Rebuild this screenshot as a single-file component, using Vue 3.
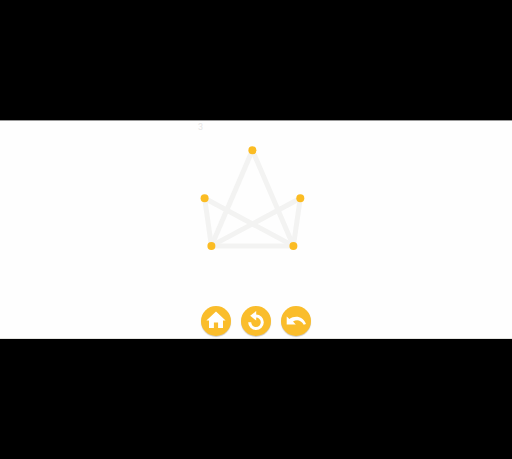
<template>
  <div class="screen">
    <main class="game">
      <div class="board">
        <span class="level">{{ level }}</span>
        <svg class="puzzle" viewBox="0 0 116 120" role="img" aria-label="Puzzle">
          <line
            v-for="edge in edges"
            :key="edge.join('-')"
            class="edge"
            :x1="points[edge[0]].x"
            :y1="points[edge[0]].y"
            :x2="points[edge[1]].x"
            :y2="points[edge[1]].y"
          />
          <circle
            v-for="(point, index) in points"
            :key="index"
            class="dot"
            :class="{ active: index === current }"
            :cx="point.x"
            :cy="point.y"
            r="4"
            @click="selectPoint(index)"
          />
        </svg>
      </div>

      <nav class="controls">
        <button type="button" aria-label="Home" @click="reset">
          <svg viewBox="0 0 30 30">
            <path d="M15 5.6 L24.6 14.4 H22 V22 H17.1 V16.4 H12.9 V22 H8 V14.4 H5.4 Z" />
          </svg>
        </button>
        <button type="button" aria-label="Restart" @click="reset">
          <svg viewBox="0 0 30 30">
            <path class="stroke" d="M15 10 A6.3 6.3 0 1 1 8.7 16.3" />
            <path d="M9.2 9.8 L15.2 5 V14.6 Z" />
          </svg>
        </button>
        <button type="button" aria-label="Undo" @click="undo">
          <svg viewBox="0 0 30 30">
            <path d="M5.7 10.5 L8.4 13.1 C13.8 9.2 22 10 25 18 L22.7 18.8 C20.3 14.3 15.9 13.1 12 15.6 L14.8 18.5 H5.7 Z" />
          </svg>
        </button>
      </nav>
    </main>
  </div>
</template>

<script setup>
import { ref } from 'vue';

const level = ref(3);

const points = [
  { x: 54.4, y: 18.3 },
  { x: 6.6, y: 66.2 },
  { x: 102.3, y: 66.2 },
  { x: 13.4, y: 113.9 },
  { x: 95.4, y: 113.9 }
];

const edges = [
  [0, 3],
  [0, 4],
  [1, 3],
  [1, 4],
  [2, 3],
  [2, 4],
  [3, 4]
];

const visited = ref([]);
const current = ref(null);

const selectPoint = (index) => {
  visited.value.push(index);
  current.value = index;
};

const undo = () => {
  visited.value.pop();
  current.value = visited.value.length ? visited.value[visited.value.length - 1] : null;
};

const reset = () => {
  visited.value = [];
  current.value = null;
};
</script>

<style>
body {
  margin: 0;
  background-color: #000;
}
</style>

<style scoped>
.screen {
  min-height: 100vh;
  display: flex;
  flex-direction: column;
  justify-content: center;
  background-color: #000;
  font-family: Roboto, sans-serif;
}

.game {
  display: flex;
  flex-direction: column;
  align-items: center;
  gap: 54px;
  padding: 1px 0 2px;
  background-color: #fefefe;
  border-top: 1px solid #999;
  border-bottom: 1px solid #e4e4e0;
}

.board {
  display: flex;
  flex-direction: column;
}

.level {
  height: 10px;
  line-height: 10px;
  font-size: 9px;
  color: #e6e6e6;
}

.puzzle {
  display: block;
  width: 116px;
  overflow: visible;
}

.edge {
  stroke: #f3f3f2;
  stroke-width: 5;
}

.dot {
  fill: #fbbc23;
  cursor: pointer;
}

.dot.active {
  fill: #e59a00;
}

.controls {
  display: flex;
  gap: 10px;
}

.controls button {
  width: 30px;
  height: 30px;
  padding: 0;
  border: none;
  border-radius: 50%;
  background-color: #fabd2b;
  box-shadow: 0 1px 1px rgba(0, 0, 0, 0.2);
  cursor: pointer;
}

.controls svg {
  display: block;
  width: 30px;
  height: 30px;
  fill: #fff;
}

.controls .stroke {
  fill: none;
  stroke: #fff;
  stroke-width: 3;
}
</style>
